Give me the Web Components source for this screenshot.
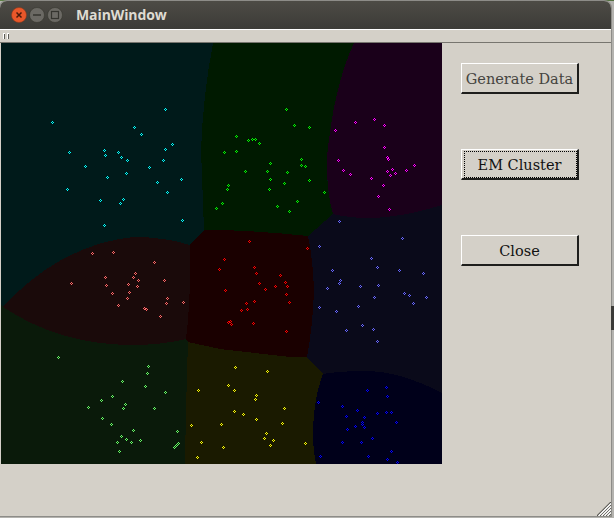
<!DOCTYPE html>
<html>
<head>
<meta charset="utf-8">
<title>MainWindow</title>
<style>
	html, body { margin: 0; padding: 0; width: 614px; height: 518px; overflow: hidden; background: #b4b3af; }
</style>
</head>
<body>
<main-window title-text="MainWindow">
	<cluster-plot slot="plot"></cluster-plot>
	<push-button slot="side" disabled-look>Generate Data</push-button>
	<push-button slot="side" focused>EM Cluster</push-button>
	<push-button slot="side">Close</push-button>
</main-window>

<script>
const windowTemplate = document.createElement('template')

windowTemplate.innerHTML = `
	<style>
		:host {
			display: flex;
			width: 614px;
			height: 518px;
			font-family: "Liberation Sans", sans-serif;
			background: linear-gradient(90deg, #5d7f45, #3f5a34 40%, #7f9a6b 70%, #53703f) no-repeat 0 0 / 100% 1px;
		}

		.frame {
			width: 611px;
			height: 515px;
			margin-top: 1px;
			flex: none;
			display: flex;
			flex-direction: column;
			background: #d4d0c8;
			border-radius: 7px 7px 0 0;
			box-shadow: 0 0 0 1px #8d8c88;
			overflow: hidden;
		}

		.desktop {
			flex: 1;
			display: flex;
			flex-direction: column;
			padding-top: 306px;
		}

		.desktop__blob {
			height: 24px;
			background: #3b3a38;
		}

		.titlebar {
			height: 28px;
			flex: none;
			display: flex;
			align-items: center;
			padding: 0 0 0 11px;
			box-sizing: border-box;
			background: linear-gradient(#4d4b45, #3c3b37);
		}

		.titlebar__btns {
			display: flex;
			gap: 2px;
		}

		.titlebar__title {
			margin-left: 13px;
			padding-bottom: 2px;
			color: #dfdbd2;
			font: bold 14px "Open Sans", sans-serif;
			letter-spacing: -0.1px;
		}

		.menubar {
			height: 14px;
			flex: none;
			box-sizing: border-box;
			border-top: 1px solid #fff;
			border-bottom: 1px solid #77756f;
			background: #d4d0c8;
			display: flex;
			align-items: center;
			padding-left: 3px;
		}

		.content {
			flex: 1;
			display: flex;
			align-items: flex-start;
			position: relative;
		}

		.side {
			width: 118px;
			margin-left: 19px;
			padding-top: 20px;
			display: flex;
			flex-direction: column;
			gap: 55px;
		}

		.grip {
			position: absolute;
			right: 0;
			bottom: 0;
		}
	</style>

	<div class="frame">
		<div class="titlebar">
			<div class="titlebar__btns">
				<svg width="16" height="16" viewBox="0 0 16 16">
					<circle cx="8" cy="8" r="7.5" fill="#e9572a" stroke="#8c3a1e" stroke-width="0.6"/>
					<path d="M5.5 5.5l5 5M10.5 5.5l-5 5" stroke="#4a1a0a" stroke-width="1.5"/>
				</svg>
				<svg width="16" height="16" viewBox="0 0 16 16">
					<circle cx="8" cy="8" r="7.5" fill="#6b6964" stroke="#38372f" stroke-width="0.6"/>
					<path d="M4 8h8" stroke="#35342f" stroke-width="1.5"/>
				</svg>
				<svg width="16" height="16" viewBox="0 0 16 16">
					<circle cx="8" cy="8" r="7.5" fill="#6b6964" stroke="#38372f" stroke-width="0.6"/>
					<rect x="4.5" y="4.5" width="7" height="7" fill="none" stroke="#35342f" stroke-width="1.2"/>
				</svg>
			</div>
			<span class="titlebar__title"></span>
		</div>
		<div class="menubar">
			<svg width="7" height="6" viewBox="0 0 7 6" shape-rendering="crispEdges">
				<path d="M0 0h2v6H0zM4 0h2v6H4z" fill="#fff"/>
				<path d="M1 1h1v5H1zM5 1h1v5H5z" fill="#5c5b56"/>
			</svg>
		</div>
		<div class="content">
			<slot name="plot"></slot>
			<div class="side"><slot name="side"></slot></div>
			<svg class="grip" width="14" height="14" viewBox="0 0 14 14">
				<path d="M14 0L0 14M14 3L3 14M14 6L6 14M14 9L9 14M14 12L12 14" stroke="#55544f" stroke-width="1.3"/>
				<path d="M14 1.5L1.5 14M14 4.5L4.5 14M14 7.5L7.5 14M14 10.5L10.5 14" stroke="#fff" stroke-width="1.3"/>
			</svg>
		</div>
	</div>
	<div class="desktop"><div class="desktop__blob"></div></div>
`

class MainWindow extends HTMLElement {
	constructor() {
		super()
		this.attachShadow({ mode: 'open' })
		this.shadowRoot.appendChild(windowTemplate.content.cloneNode(true))
		this.shadowRoot.querySelector('.titlebar__title').textContent = this.getAttribute('title-text')
	}
}

const buttonTemplate = document.createElement('template')

buttonTemplate.innerHTML = `
	<style>
		:host {
			display: block;
			height: 31px;
		}

		.button {
			height: 100%;
			box-sizing: border-box;
			display: flex;
			align-items: center;
			justify-content: center;
			padding-top: 2px;
			background: #d4d0c8;
			color: #111;
			font: 14.5px "DejaVu Serif", serif;
			border: 1px solid #fff;
			border-right-color: #1e1e1c;
			border-bottom: 2px solid #1e1e1c;
			border-right-width: 2px;
		}

		:host([disabled-look]) .button {
			color: #45443f;
		}

		:host([focused]) .button {
			position: relative;
		}

		:host([focused]) .button::after {
			content: '';
			position: absolute;
			inset: 1px 0 0 2px;
			border: 1px dotted #000;
		}
	</style>
	<div class="button"><span><slot></slot></span></div>
`

class PushButton extends HTMLElement {
	constructor() {
		super()
		this.attachShadow({ mode: 'open' })
		this.shadowRoot.appendChild(buttonTemplate.content.cloneNode(true))
	}
}

// all coords below are in screenshot pixels, the svg viewBox starts at the canvas corner
const REGIONS = [
	{ fill: '#001a00', d: 'M213 43H354Q334 85 327 157Q326 190 333 214L308 236Q260 231 220 230H204L201 150Q203 95 213 43Z' },
	{ fill: '#1a001a', d: 'M354 43H442V205Q400 218 367 218Q350 218 333 214Q326 190 327 157Q334 85 354 43Z' },
	{ fill: '#0a0a1a', d: 'M333 214Q350 218 367 218Q400 218 442 205V393Q400 371 365 371Q340 371 323 374L307 357Q313 325 314 290Q313 260 308 236Z' },
	{ fill: '#1a0000', d: 'M204 230H220Q260 231 308 236Q313 260 314 290Q313 325 307 357H290L220 349L188 342L186 339Q191 300 190 245Z' },
	{ fill: '#1a0a0a', d: 'M3 307Q60 245 133 237Q165 237 190 245Q191 300 186 339Q160 345 133 345Q60 345 3 307Z' },
	{ fill: '#0a1a0a', d: 'M1 304L3 307Q60 345 133 345Q160 345 186 339L188 342Q186 400 185 464H1Z' },
	{ fill: '#1a1a00', d: 'M188 342L220 349L290 357H307L323 374Q313 400 313 437Q313 450 316 464H185Q186 400 188 342Z' },
	{ fill: '#00001a', d: 'M323 374Q340 371 365 371Q400 371 442 393V464H316Q313 450 313 437Q313 400 323 374Z' }
]

const POINTS = {
	'#00ffff': [[52,122],[165,109],[134,127],[141,134],[172,144],[165,149],[69,152],[104,150],[105,155],[118,152],[121,157],[127,160],[163,160],[149,167],[85,166],[126,173],[107,177],[181,179],[157,182],[67,189],[167,192],[100,200],[123,199],[120,203],[182,220],[104,225]],
	'#00ff00': [[286,109],[294,125],[309,127],[236,136],[248,140],[252,139],[255,139],[259,143],[224,152],[236,151],[301,159],[270,163],[301,165],[305,166],[245,171],[267,171],[287,172],[270,179],[309,180],[284,183],[228,185],[227,189],[269,189],[324,192],[222,203],[297,201],[277,206],[289,211],[216,208]],
	'#ff00ff': [[355,122],[374,119],[384,125],[335,130],[384,147],[387,157],[388,159],[338,160],[414,165],[392,169],[406,170],[343,170],[387,171],[395,173],[350,174],[390,175],[371,178],[383,185],[378,196],[389,209]],
	'#6666ff': [[339,221],[402,238],[319,246],[371,258],[377,267],[332,270],[399,270],[423,273],[340,280],[339,283],[360,286],[378,285],[327,288],[404,293],[409,295],[374,297],[426,297],[413,303],[319,307],[358,306],[336,311],[362,325],[373,329],[346,330],[377,341]],
	'#ff0000': [[249,241],[307,248],[224,259],[219,269],[254,267],[256,273],[280,275],[259,283],[285,282],[275,286],[287,286],[265,289],[225,290],[286,294],[254,301],[246,303],[289,302],[241,310],[247,309],[228,322],[230,321],[231,324],[253,323],[286,331]],
	'#ff6666': [[92,253],[113,252],[154,262],[135,273],[133,277],[105,277],[138,280],[164,280],[71,283],[128,284],[106,285],[137,286],[129,292],[112,293],[127,298],[167,298],[166,303],[183,302],[118,305],[144,308],[146,309],[160,316]],
	'#66ff66': [[58,357],[148,366],[147,373],[122,381],[145,386],[165,392],[112,396],[101,400],[125,404],[123,408],[88,407],[154,408],[102,418],[111,424],[133,430],[177,431],[121,436],[126,439],[117,442],[131,442],[140,440],[119,451],[178,443],[177,444],[176,445],[175,446],[174,447]],
	'#ffff00': [[235,367],[267,371],[228,385],[234,390],[256,395],[255,399],[284,408],[234,411],[243,414],[256,419],[221,424],[282,423],[266,433],[264,438],[273,440],[270,445],[305,443],[223,447],[198,390],[191,425],[201,442],[197,457]],
	'#0000ff': [[367,390],[386,387],[387,396],[318,402],[342,406],[357,410],[346,416],[364,417],[377,413],[386,412],[391,412],[396,422],[362,422],[362,424],[364,427],[355,426],[347,429],[372,438],[342,442],[361,442],[391,451],[320,456],[368,456],[387,459],[397,462]]
}

class ClusterPlot extends HTMLElement {
	constructor() {
		super()
		this.attachShadow({ mode: 'open' })

		const regions = REGIONS.map(r => `<path fill="${r.fill}" d="${r.d}"/>`).join('')

		// each sample is a hollow 3x3 plus, drawn as single pixels
		const points = Object.keys(POINTS).map(color => {
			const rects = POINTS[color].map(([x, y]) => [[x - 1, y], [x + 1, y], [x, y - 1], [x, y + 1]]
				.map(([px, py]) => `<rect x="${px}" y="${py}" width="1" height="1"/>`).join('')).join('')
			return `<g fill="${color}">${rects}</g>`
		}).join('')

		this.shadowRoot.innerHTML = `
			<style>
				:host {
					display: block;
					width: 441px;
					height: 421px;
					margin-left: 1px;
				}

				svg {
					display: block;
				}
			</style>
			<svg width="441" height="421" viewBox="1 43 441 421" shape-rendering="crispEdges">
				<rect x="1" y="43" width="441" height="421" fill="#001a1a"/>
				${regions}
				${points}
			</svg>
		`
	}
}

window.customElements.define('main-window', MainWindow)
window.customElements.define('push-button', PushButton)
window.customElements.define('cluster-plot', ClusterPlot)
</script>
</body>
</html>
